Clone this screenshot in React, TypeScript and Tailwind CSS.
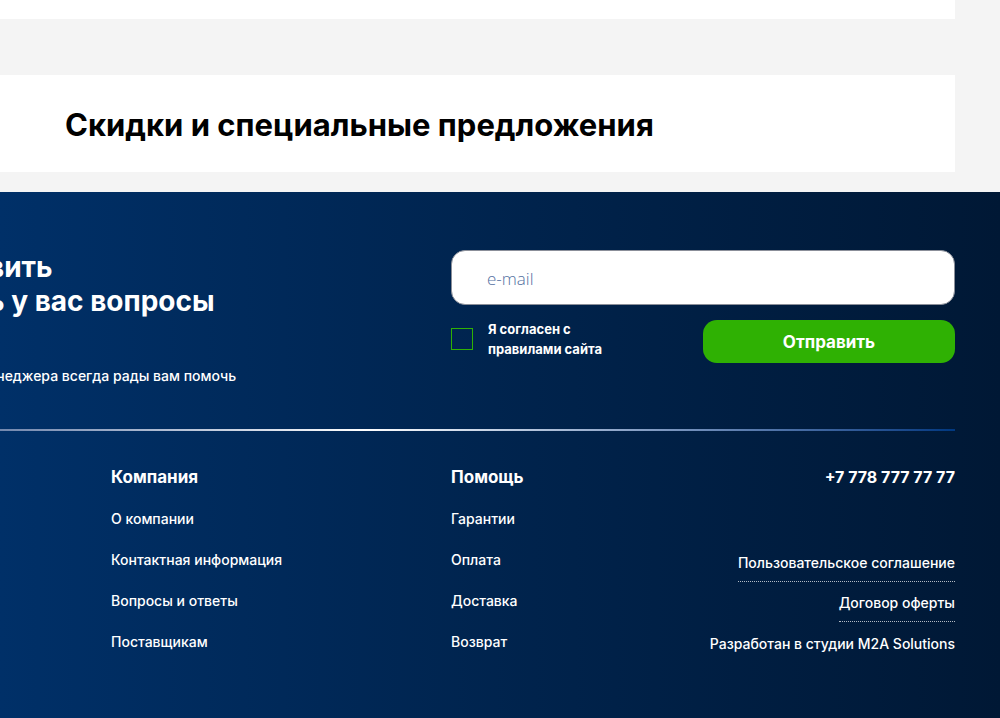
const company = ["О компании", "Контактная информация", "Вопросы и ответы", "Поставщикам"];
const help = ["Гарантии", "Оплата", "Доставка", "Возврат"];

function LinkColumn({ title, items }: { title: string; items: string[] }) {
  return (
    <nav aria-label={title}>
      <h3 className="text-[17px] leading-6 font-bold">{title}</h3>
      <ul className="mt-5 flex flex-col gap-[21px] text-[14px] leading-5 font-medium">
        {items.map((item) => (
          <li key={item}>
            <a href="#">{item}</a>
          </li>
        ))}
      </ul>
    </nav>
  );
}

export default function App() {
  return (
    <div className="flex min-h-screen flex-col overflow-x-hidden bg-[#f4f4f4] font-['Inter','Liberation_Sans',sans-serif]">
      <main className="pr-[45px] pb-5">
        <div className="h-[19px] bg-white" />
        <section className="mt-14 bg-white pt-[30px] pb-7 pl-[65px]">
          <h1 className="text-[31px] leading-[39px] font-bold text-black">
            Скидки и специальные предложения
          </h1>
        </section>
      </main>

      <footer className="flex-1 bg-linear-to-r from-[#003068] to-[#001835] pr-[45px] text-white">
        <div className="grid grid-cols-[451fr_504fr] pt-[58px]">
          <div className="whitespace-nowrap">
            <h2 className="-ml-3 text-[28px] leading-[34px] font-bold">
              вить
              <br />ь у вас вопросы
            </h2>
            <p className="-ml-3 mt-12 text-[14px] leading-5 font-medium">
              енеджера всегда рады вам помочь
            </p>
          </div>

          <form onSubmit={(e) => e.preventDefault()}>
            <input
              type="email"
              aria-label="e-mail"
              placeholder="e-mail"
              className="block h-[55px] w-full rounded-[14px] border border-[#8b8f99] bg-white px-[35px] pt-0.5 font-['Open_Sans',sans-serif] text-[17px] font-light text-black outline-none placeholder:text-[#53709f]"
            />
            <div className="mt-[15px] flex items-start justify-between">
              <label className="-mt-px flex items-center gap-[15px] text-[13px] leading-5 font-bold">
                <input
                  type="checkbox"
                  className="size-[22px] appearance-none border border-[#2fb103] checked:bg-[#2fb103]"
                />
                <span>
                  Я согласен с<br />
                  правилами сайта
                </span>
              </label>
              <button
                type="submit"
                className="h-[43px] w-1/2 rounded-[14px] bg-[#2fb103] pt-0.5 text-[17px] font-bold"
              >
                Отправить
              </button>
            </div>
          </form>
        </div>

        <hr className="mt-[43px] h-0.5 border-0 bg-linear-to-r from-[#7388ae] via-white via-38% to-[#003880]" />

        <div className="grid grid-cols-[340fr_170fr_334fr] pt-[34px] pl-[111px] pb-16">
          <LinkColumn title="Компания" items={company} />
          <LinkColumn title="Помощь" items={help} />
          <div className="flex flex-col items-end text-[14px] leading-5 font-medium">
            <a href="tel:+77787777777" className="text-[16px] leading-6 font-bold">
              +7 778 777 77 77
            </a>
            <a href="#" className="mt-16 border-b border-dotted border-white/70 pb-2">
              Пользовательское соглашение
            </a>
            <a href="#" className="mt-[11px] border-b border-dotted border-white/70 pb-2">
              Договор оферты
            </a>
            <a href="#" className="mt-3">
              Разработан в студии M2A Solutions
            </a>
          </div>
        </div>
      </footer>
    </div>
  );
}
